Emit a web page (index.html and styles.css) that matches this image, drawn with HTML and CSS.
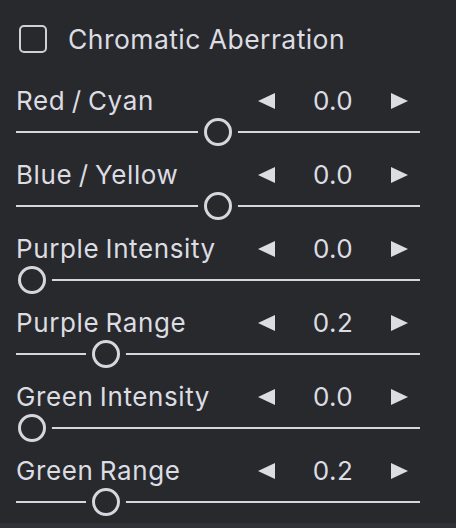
FILE: index.html
```html
<!DOCTYPE html>
<html>
<head>
<meta charset="utf-8">
<link rel="stylesheet" href="styles.css">
</head>
<body>
<div class="panel">
  <label class="header">
    <span class="checkbox"></span>
    <span class="title">Chromatic Aberration</span>
  </label>
  <div class="rows">
    <div class="row">
      <div class="row-head">
        <span class="label">Red / Cyan</span>
        <div class="stepper">
          <svg class="arrow" width="17" height="16" viewBox="0 0 17 16"><polygon points="0,8 17,0 17,16"/></svg>
          <span class="value">0.0</span>
          <svg class="arrow" width="17" height="16" viewBox="0 0 17 16"><polygon points="17,8 0,0 0,16"/></svg>
        </div>
      </div>
      <div class="track"><span class="thumb" style="margin-left:188px"></span></div>
    </div>
    <div class="row">
      <div class="row-head">
        <span class="label">Blue / Yellow</span>
        <div class="stepper">
          <svg class="arrow" width="17" height="16" viewBox="0 0 17 16"><polygon points="0,8 17,0 17,16"/></svg>
          <span class="value">0.0</span>
          <svg class="arrow" width="17" height="16" viewBox="0 0 17 16"><polygon points="17,8 0,0 0,16"/></svg>
        </div>
      </div>
      <div class="track"><span class="thumb" style="margin-left:188px"></span></div>
    </div>
    <div class="row">
      <div class="row-head">
        <span class="label">Purple Intensity</span>
        <div class="stepper">
          <svg class="arrow" width="17" height="16" viewBox="0 0 17 16"><polygon points="0,8 17,0 17,16"/></svg>
          <span class="value">0.0</span>
          <svg class="arrow" width="17" height="16" viewBox="0 0 17 16"><polygon points="17,8 0,0 0,16"/></svg>
        </div>
      </div>
      <div class="track"><span class="thumb" style="margin-left:2px"></span></div>
    </div>
    <div class="row">
      <div class="row-head">
        <span class="label">Purple Range</span>
        <div class="stepper">
          <svg class="arrow" width="17" height="16" viewBox="0 0 17 16"><polygon points="0,8 17,0 17,16"/></svg>
          <span class="value">0.2</span>
          <svg class="arrow" width="17" height="16" viewBox="0 0 17 16"><polygon points="17,8 0,0 0,16"/></svg>
        </div>
      </div>
      <div class="track"><span class="thumb" style="margin-left:76.4px"></span></div>
    </div>
    <div class="row">
      <div class="row-head">
        <span class="label">Green Intensity</span>
        <div class="stepper">
          <svg class="arrow" width="17" height="16" viewBox="0 0 17 16"><polygon points="0,8 17,0 17,16"/></svg>
          <span class="value">0.0</span>
          <svg class="arrow" width="17" height="16" viewBox="0 0 17 16"><polygon points="17,8 0,0 0,16"/></svg>
        </div>
      </div>
      <div class="track"><span class="thumb" style="margin-left:2px"></span></div>
    </div>
    <div class="row">
      <div class="row-head">
        <span class="label">Green Range</span>
        <div class="stepper">
          <svg class="arrow" width="17" height="16" viewBox="0 0 17 16"><polygon points="0,8 17,0 17,16"/></svg>
          <span class="value">0.2</span>
          <svg class="arrow" width="17" height="16" viewBox="0 0 17 16"><polygon points="17,8 0,0 0,16"/></svg>
        </div>
      </div>
      <div class="track"><span class="thumb" style="margin-left:76.4px"></span></div>
    </div>
  </div>
</div>
<div class="footer"></div>
</body>
</html>
```

FILE: styles.css
```css
html, body {
  margin: 0;
  padding: 0;
  background: #28292c;
}
body {
  width: 456px;
  height: 528px;
  display: flex;
  flex-direction: column;
  overflow: hidden;
  font-family: Inter, "Noto Sans", sans-serif;
  color: #dcdce3;
}
.panel {
  flex: 1;
  padding: 4px 36px 0 16px;
}
.header {
  display: flex;
  align-items: center;
  height: 69px;
  padding-left: 3px;
  gap: 21px;
}
.checkbox {
  box-sizing: border-box;
  width: 28px;
  height: 28px;
  border: 2.5px solid #d0d0d8;
  border-radius: 5px;
  flex: none;
}
.title {
  font-size: 26.5px;
  line-height: 34px;
  letter-spacing: 0.45px;
}
.rows {
  display: flex;
  flex-direction: column;
  gap: 12px;
  padding-top: 11.5px;
}
.row {
  display: flex;
  flex-direction: column;
}
.row-head {
  display: flex;
  align-items: center;
  justify-content: space-between;
  height: 32px;
}
.label {
  font-size: 26px;
  line-height: 32px;
  letter-spacing: 0.6px;
  word-spacing: -1.5px;
}
.stepper {
  display: flex;
  align-items: center;
  width: 150px;
  margin-right: 12px;
}
.arrow {
  fill: #dcdce3;
  flex: none;
}
.value {
  flex: 1;
  text-align: center;
  font-size: 26px;
  line-height: 32px;
  letter-spacing: 0.4px;
}
.track {
  position: relative;
  height: 30px;
  display: flex;
  align-items: center;
}
.track::before {
  content: "";
  position: absolute;
  left: 0;
  right: 0;
  top: 14px;
  height: 2px;
  background: #d6d6de;
}
.thumb {
  position: relative;
  box-sizing: border-box;
  width: 28px;
  height: 28px;
  border: 3px solid #d6d6de;
  border-radius: 50%;
  background: #28292c;
  box-shadow: 0 0 0 6px #28292c;
}
.footer {
  height: 5px;
  background: #303136;
  flex: none;
}
```
